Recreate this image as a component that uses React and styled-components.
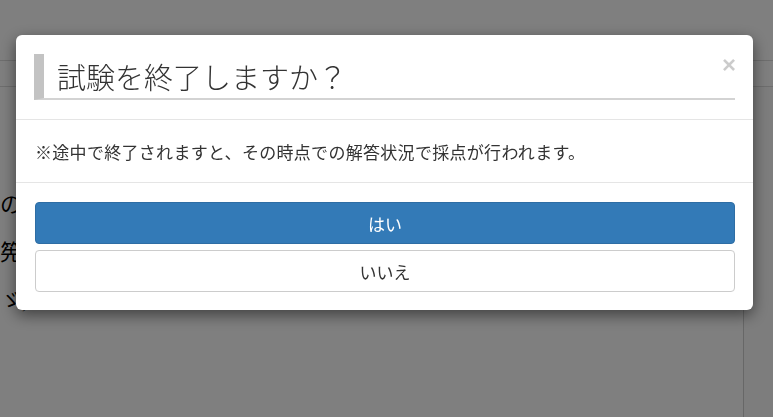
import React from 'react'
import styled, { createGlobalStyle } from 'styled-components'

const GlobalStyle = createGlobalStyle`
  html, body {
    margin: 0;
    padding: 0;
    height: 100%;
    overflow: hidden;
    background: #ffffff;
  }
  * {
    box-sizing: border-box;
  }
`;

const jp = `"Noto Sans CJK JP", "Noto Sans", sans-serif`;

function App() {
  return (
    <>
      <GlobalStyle />
      <Page>
        <TopBar />
        <SubBar />
        <Layout>
          <Main>
            <Para>の）</Para>
            <Para>筅</Para>
            <Para>ゞ,</Para>
          </Main>
          <Side />
        </Layout>
      </Page>
      <Overlay>
        <Dialog>
          <Header>
            <Title>試験を終了しますか？</Title>
            <Close>×</Close>
          </Header>
          <Body>※途中で終了されますと、その時点での解答状況で採点が行われます。</Body>
          <Footer>
            <Button primary>はい</Button>
            <Button>いいえ</Button>
          </Footer>
        </Dialog>
      </Overlay>
    </>
  )
}

export default App

const Page = styled.div`
  height: 417px;
  display: flex;
  flex-direction: column;
  background: #ffffff;
`;

const TopBar = styled.div`
  height: 61px;
  border-bottom: 1px solid #dcdcdc;
`;

const SubBar = styled.div`
  height: 26px;
  border-bottom: 1px solid #dcdcdc;
`;

const Layout = styled.div`
  flex: 1;
  display: grid;
  grid-template-columns: 744px 1fr;
`;

const Main = styled.div`
  border-right: 1px solid #cfcfcf;
  padding-top: 106px;
`;

const Para = styled.p`
  margin: 0 0 24px;
  font-family: "Liberation Serif", "Noto Sans CJK JP", serif;
  font-size: 22px;
  line-height: 24px;
  color: #000;
`;

const Side = styled.div`
  background: #fafafa;
`;

const Overlay = styled.div`
  position: fixed;
  inset: 0;
  background: rgba(0, 0, 0, 0.5);
  padding: 35px 20px 0 16px;
`;

const Dialog = styled.div`
  width: 737px;
  background: #ffffff;
  border-radius: 6px;
  box-shadow: 0 5px 15px rgba(0, 0, 0, 0.5);
  font-family: ${jp};
  color: #333333;
`;

const Header = styled.div`
  position: relative;
  padding: 19px 18px 19px 18px;
  border-bottom: 1px solid #e5e5e5;
`;

const Title = styled.h4`
  margin: 0;
  height: 46px;
  padding-left: 13px;
  border-left: 10px solid #c3c3c3;
  border-bottom: 2px solid #d3d3d3;
  font-family: ${jp};
  font-size: 29px;
  font-weight: 300;
  line-height: 44px;
  color: #333333;
`;

const Close = styled.span`
  position: absolute;
  top: 18px;
  right: 17px;
  font-family: "Liberation Sans", Arial, sans-serif;
  font-size: 24px;
  font-weight: 700;
  line-height: 1;
  color: #000;
  opacity: 0.2;
`;

const Body = styled.div`
  height: 63px;
  padding: 0 19px;
  display: flex;
  align-items: center;
  border-bottom: 1px solid #e5e5e5;
  font-size: 17px;
  letter-spacing: 0.3px;
  color: #333333;
`;

const Footer = styled.div`
  padding: 19px 18px 18px 19px;
  display: flex;
  flex-direction: column;
  gap: 6px;
`;

const Button = styled.div`
  height: 42px;
  display: flex;
  align-items: center;
  justify-content: center;
  border-radius: 4px;
  font-size: 17px;
  border: 1px solid ${p => (p.primary ? '#2e6da4' : '#cccccc')};
  background: ${p => (p.primary ? '#337ab7' : '#ffffff')};
  color: ${p => (p.primary ? '#ffffff' : '#333333')};
`;
